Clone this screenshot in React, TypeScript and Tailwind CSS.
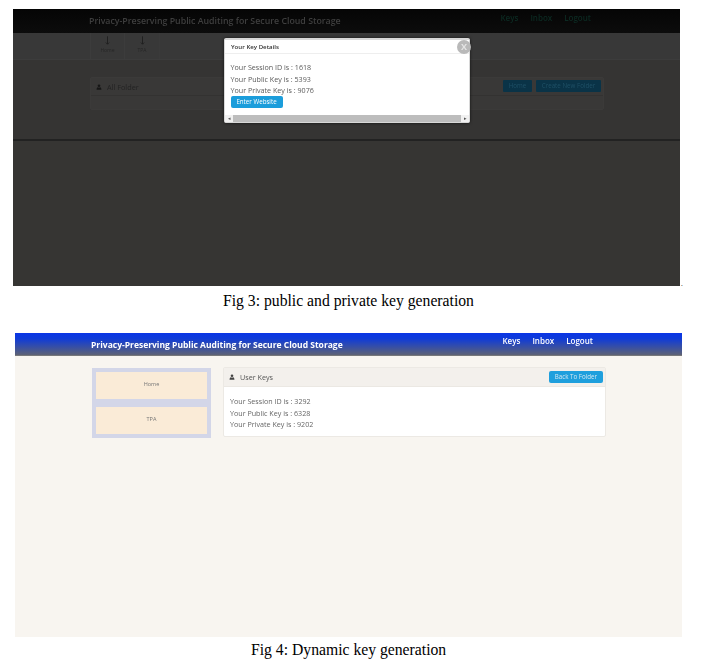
import React from 'react';

function UserIcon({ className }: { className: string }) {
  return (
    <svg viewBox="0 0 16 16" className={className} fill="currentColor">
      <circle cx="8" cy="4.500" r="3.500" />
      <path d="M1.500 15c0-4 1.500-6.500 3.500-6.500 1 .8 2 1.200 3 1.200s2-.4 3-1.200c2 0 3.500 2.500 3.500 6.500z" />
    </svg>
  );
}

function DownArrow() {
  return (
    <svg viewBox="0 0 6 10" className="w-[5px] h-[9px] text-[#1c1c1c]" fill="none" stroke="currentColor" strokeWidth="1">
      <path d="M3 0v9M1 7.500L3 9.500l2-2" />
    </svg>
  );
}

function KeyDetailsModal() {
  return (
    <div className="absolute left-[211px] top-[29px] w-[246px] h-[85px] bg-white border-t-2 border-x border-b border-[#d8d8d8] shadow-[0_0_3px_rgba(0,0,0,0.7)] rounded-[2px] flex flex-col">
      <div className="h-[14px] border-b border-[#eeeeee] pl-[6px] text-[6.100px] font-semibold text-[#333333] leading-[13px]">
        Your Key Details
      </div>
      <div className="flex-1 pl-[5.500px] pt-[8px] text-[7.150px] leading-[11.700px] text-[#5a5a5a]">
        <p>Your Session ID is : 1618</p>
        <p>Your Public Key is : 5393</p>
        <p>Your Private Key is : 9076</p>
        <button className="block -mt-[1px] w-[52px] h-[12px] rounded-[2px] bg-[#1b9ddb] text-white text-[6.200px] leading-[12px] text-center">
          Enter Website
        </button>
      </div>
      <div className="h-[7px] bg-[#f1f1f1] flex items-center">
        <span className="w-[8px] text-center text-[5px] leading-[7px] text-[#555555]">◂</span>
        <div className="h-[7px] w-[228px] bg-[#bdbdbd]" />
        <span className="ml-auto w-[8px] text-center text-[5px] leading-[7px] text-[#555555]">▸</span>
      </div>
      <div className="absolute top-0 -right-[2px] w-[14px] h-[14px] rounded-full bg-[#b9b9b9] text-[#e4e4e4] text-[9px] leading-[14px] text-center font-bold">
        X
      </div>
    </div>
  );
}

function Fig3() {
  return (
    <div className="relative w-[667px] h-[277px] bg-[#363533] blur-[0.4px]">
      <div className="h-[24px] bg-[linear-gradient(#050505,#0c0c0c)] flex">
        <div className="ml-[76px] pt-[6px] text-[8.800px] leading-[13px] font-semibold text-[#3f3f3f]">
          Privacy-Preserving Public Auditing for Secure Cloud Storage
        </div>
        <div className="ml-auto mr-[89px] pt-[3px] flex gap-[12px] text-[8px] leading-[12px] font-semibold text-[#0c2a22]">
          <span>Keys</span>
          <span>Inbox</span>
          <span>Logout</span>
        </div>
      </div>
      <div className="h-[27px] bg-[#383838] border-b border-[#3c3c3c] pl-[77px] flex">
        <div className="w-[35px] border-x border-[#3c3c3c] flex flex-col items-center pt-[3px] text-[5px] leading-[10px] text-[#262626]">
          <DownArrow />
          <span>Home</span>
        </div>
        <div className="w-[35px] border-r border-[#3a3a3a] flex flex-col items-center pt-[3px] text-[5px] leading-[10px] text-[#262626]">
          <DownArrow />
          <span>TPA</span>
        </div>
      </div>
      <div className="h-[79px] bg-[#353433] pt-[17px] pl-[77px]">
        <div className="w-[514px] h-[33px] bg-[#393837] border border-[#3b3a39] rounded-[2px]">
          <div className="h-[18px] border-b border-[#333231] flex items-center pl-[5px]">
            <UserIcon className="w-[6px] h-[6px] mt-[1px] text-[#161616]" />
            <span className="ml-[5px] mt-[1px] text-[7.300px] text-[#232323]">All Folder</span>
            <button className="ml-auto -mt-[1px] w-[29px] h-[12px] rounded-[1px] bg-[#0a3347] text-[6.200px] leading-[12px] text-[#1f5066]">
              Home
            </button>
            <button className="ml-[4px] mr-[2px] -mt-[1px] w-[65px] h-[12px] rounded-[1px] bg-[#0a3347] text-[6.200px] leading-[12px] text-[#1f5066]">
              Create New Folder
            </button>
          </div>
        </div>
      </div>
      <div className="h-[2px] bg-[#222222]" />
      <KeyDetailsModal />
    </div>
  );
}

function Fig4() {
  return (
    <div className="ml-[15px] w-[667px] h-[304px] bg-[#f8f5f0] blur-[0.4px]">
      <div className="h-[23px] bg-[linear-gradient(#0a35e6,#0f3bd8_25%,#5d6275)] border-b border-[#77787a] flex">
        <div className="ml-[76px] pt-[5px] text-[8.500px] leading-[13px] font-bold text-white">
          Privacy-Preserving Public Auditing for Secure Cloud Storage
        </div>
        <div className="ml-auto mr-[89px] pt-[2px] flex gap-[12px] text-[8px] leading-[12px] font-semibold text-white">
          <span>Keys</span>
          <span>Inbox</span>
          <span>Logout</span>
        </div>
      </div>
      <div className="flex pt-[12px] pl-[77px]">
        <div className="w-[119px] h-[70px] bg-[#d3d6e8] p-[4px] flex flex-col gap-[8px]">
          <div className="h-[27px] pb-[3px] bg-[#faebd7] flex items-center justify-center text-[5.500px] text-[#777777]">Home</div>
          <div className="h-[27px] pb-[3px] bg-[#faebd7] flex items-center justify-center text-[5.500px] text-[#777777]">TPA</div>
        </div>
        <div className="ml-[12px] -mt-[1px] w-[383px] h-[70px] bg-white border border-[#ece9e4] rounded-[2px]">
          <div className="h-[19px] bg-[#f3f0ec] border-b border-[#ebe8e3] flex items-center pl-[5px]">
            <UserIcon className="w-[6px] h-[6px] text-[#444444]" />
            <span className="ml-[5px] text-[7.200px] text-[#555555]">User Keys</span>
            <button className="ml-auto mr-[2px] w-[54px] h-[12px] rounded-[2px] bg-[#1f9fdd] text-[6.200px] leading-[12px] text-[#d5e8f2]">
              Back To Folder
            </button>
          </div>
          <div className="pl-[6px] pt-[9px] text-[7.150px] leading-[11.700px] text-[#666666]">
            <p>Your Session ID is : 3292</p>
            <p>Your Public Key is : 6328</p>
            <p>Your Private Key is : 9202</p>
          </div>
        </div>
      </div>
    </div>
  );
}

export default function App() {
  return (
    <div className="w-[705px] h-[667px] bg-white pt-[9px] overflow-hidden font-['Open_Sans',sans-serif]">
      <div className="pl-[13px] flex items-end">
        <Fig3 />
        <span className="ml-[1px] text-[7px] leading-[4px] text-black font-['Liberation_Serif',serif]">.</span>
      </div>
      <p className="mt-[6px] pl-[223px] h-[41px] text-[15.700px] leading-[18px] text-black font-['Liberation_Serif',serif]">
        Fig 3: public and private key generation
      </p>
      <Fig4 />
      <p className="mt-[4px] pl-[251px] text-[15.700px] leading-[18px] text-black font-['Liberation_Serif',serif]">
        Fig 4: Dynamic key generation
      </p>
    </div>
  );
}
